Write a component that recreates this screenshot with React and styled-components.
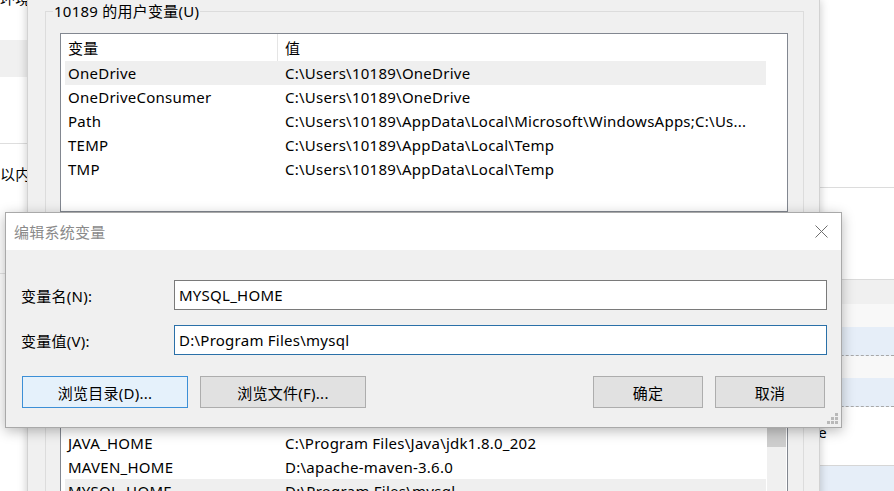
import React from 'react'
import styled, { createGlobalStyle } from 'styled-components'

const GlobalStyle = createGlobalStyle`
  html, body {
    margin: 0;
    padding: 0;
    background: #ffffff;
    overflow: hidden;
  }
  body {
    font-family: "Noto Sans", "Noto Sans CJK SC", sans-serif;
    font-size: 15px;
    letter-spacing: 0.25px;
    color: #000;
  }
  * {
    box-sizing: border-box;
  }
`

const Desktop = styled.div`
  position: relative;
  width: 894px;
  height: 491px;
  overflow: hidden;
  background: #ffffff;
`

/* ---------- window at the very back ---------- */

const BackWindow = styled.div`
  position: absolute;
  inset: 0;
  display: flex;
  justify-content: space-between;
  background: #ffffff;
`

const BackLeft = styled.div`
  width: 27px;
  display: flex;
  flex-direction: column;
  overflow: hidden;
`

const BackText = styled.div`
  height: 20px;
  line-height: 20px;
  white-space: nowrap;
  margin-top: ${p => p.$mt || 0}px;
  flex-shrink: 0;
`

const BackBand = styled.div`
  height: ${p => p.$h}px;
  margin-top: ${p => p.$mt || 0}px;
  background: ${p => p.$bg || '#ffffff'};
  border-top: ${p => (p.$top ? '1px solid #dadada' : 'none')};
  border-bottom: ${p => p.$bottom || 'none'};
  flex-shrink: 0;
`

const BackRight = styled.div`
  width: 300px;
  display: flex;
  flex-direction: column;
`

const BackTail = styled.div`
  height: 59px;
  padding: 0 67px 8px 0;
  display: flex;
  align-items: center;
  justify-content: flex-end;
  border-bottom: 1px solid #d6d6d6;
  white-space: nowrap;
  flex-shrink: 0;
`

/* ---------- environment variables window ---------- */

const EnvWindow = styled.div`
  position: absolute;
  left: 27px;
  top: 0;
  width: 793px;
  height: 620px;
  background: #f0f0f0;
  border-left: 1px solid #d2d2d2;
  border-right: 1px solid #d2d2d2;
  box-shadow: 0 0 9px rgba(0, 0, 0, 0.22);
  padding: 11px 0 0 17px;
`

const Group = styled.div`
  position: relative;
  width: 759px;
  border: 1px solid #dcdcdc;
  padding: 21px 0 0 14px;
  margin-bottom: 16px;
`

const Legend = styled.span`
  position: absolute;
  top: -11px;
  left: 7px;
  padding: 0 1px;
  line-height: 20px;
  background: #f0f0f0;
  white-space: nowrap;
`

const ListView = styled.div`
  width: 728px;
  height: ${p => p.$h}px;
  border: 1px solid #828790;
  background: #ffffff;
  display: flex;
  flex-direction: column;
  overflow: hidden;
`

const HeaderRow = styled.div`
  height: 27px;
  width: 701px;
  margin-left: 4px;
  display: flex;
  flex-shrink: 0;
`

const HeaderCell = styled.div`
  display: flex;
  align-items: center;
  flex: ${p => (p.$first ? '0 0 213px' : '1')};
  padding-left: ${p => (p.$first ? 3 : 7)}px;
  border-right: ${p => (p.$first ? '1px solid #e5e5e5' : 'none')};
`

const ListBody = styled.div`
  flex: 1;
  display: flex;
`

const Rows = styled.div`
  width: 701px;
  margin-left: 4px;
  display: flex;
  flex-direction: column;
`

const Row = styled.div`
  height: 24px;
  display: flex;
  align-items: center;
  background: ${p => (p.$selected ? '#efefef' : 'transparent')};
  white-space: nowrap;
  flex-shrink: 0;
`

const Cell = styled.div`
  flex: ${p => (p.$first ? '0 0 213px' : '1')};
  padding-left: ${p => (p.$first ? 3 : 7)}px;
  overflow: hidden;
`

const ScrollBar = styled.div`
  width: 19px;
  margin-left: 1px;
  background: #f0f0f0;
  padding-top: 17px;
`

const Thumb = styled.div`
  height: 95px;
  background: #cdcdcd;
`

/* space taken by the new / edit / delete buttons, hidden behind the dialog */
const GroupButtons = styled.div`
  height: 56px;
`

/* ---------- edit dialog ---------- */

const Dialog = styled.div`
  position: absolute;
  left: 5px;
  top: 212px;
  width: 837px;
  height: 216px;
  background: #f0f0f0;
  border: 1px solid #a9a9a9;
  box-shadow: 0 3px 12px rgba(0, 0, 0, 0.28);
  display: flex;
  flex-direction: column;
`

const TitleBar = styled.div`
  height: 37px;
  background: #ffffff;
  display: flex;
  align-items: center;
  padding-left: 8px;
  flex-shrink: 0;
`

const Title = styled.span`
  color: #8a8a8a;
`

const CloseButton = styled.div`
  margin-left: auto;
  width: 40px;
  height: 37px;
  display: flex;
  align-items: center;
  justify-content: center;
`

const DialogBody = styled.div`
  flex: 1;
  padding: 30px 14px 0 15px;
  display: flex;
  flex-direction: column;
`

const FieldRow = styled.div`
  display: flex;
  align-items: center;
  height: 30px;
  margin-bottom: ${p => p.$mb}px;
`

const Label = styled.div`
  width: 153px;
  flex-shrink: 0;
`

const TextBox = styled.div`
  flex: 1;
  height: 30px;
  background: #ffffff;
  border: 1px solid ${p => (p.$focused ? '#2a70a8' : '#7a7a7a')};
  padding-left: 4px;
  display: flex;
  align-items: center;
  white-space: nowrap;
`

const ButtonRow = styled.div`
  display: flex;
  gap: 12px;
  padding: 0 2px 0 1px;
`

const Button = styled.div`
  width: ${p => p.$w}px;
  height: 32px;
  border: 1px solid ${p => (p.$default ? '#3c8fd6' : '#adadad')};
  background: ${p => (p.$default ? '#e5f1fb' : '#e1e1e1')};
  display: flex;
  align-items: center;
  justify-content: center;
  margin-left: ${p => (p.$push ? 'auto' : '0')};
`

const Grip = styled.svg`
  position: absolute;
  right: 2px;
  bottom: 2px;
`

const userVars = [
  ['OneDrive', 'C:\\Users\\10189\\OneDrive'],
  ['OneDriveConsumer', 'C:\\Users\\10189\\OneDrive'],
  ['Path', 'C:\\Users\\10189\\AppData\\Local\\Microsoft\\WindowsApps;C:\\Us...'],
  ['TEMP', 'C:\\Users\\10189\\AppData\\Local\\Temp'],
  ['TMP', 'C:\\Users\\10189\\AppData\\Local\\Temp'],
]

// rows above JAVA_HOME are covered by the dialog, so they stay blank
const systemVars = [
  ['', ''],
  ['', ''],
  ['', ''],
  ['', ''],
  ['JAVA_HOME', 'C:\\Program Files\\Java\\jdk1.8.0_202'],
  ['MAVEN_HOME', 'D:\\apache-maven-3.6.0'],
  ['MYSQL_HOME', 'D:\\Program Files\\mysql'],
  ['NUMBER_OF_PROCESSORS', '8'],
]

const VarList = ({ items, height, selected, scroll, header = true }) => (
  <ListView $h={height}>
    <HeaderRow>
      {header && <HeaderCell $first>变量</HeaderCell>}
      {header && <HeaderCell>值</HeaderCell>}
    </HeaderRow>
    <ListBody>
      <Rows>
        {items.map(([name, value], i) => (
          <Row key={i} $selected={i === selected}>
            <Cell $first>{name}</Cell>
            <Cell>{value}</Cell>
          </Row>
        ))}
      </Rows>
      {scroll && (
        <ScrollBar>
          <Thumb />
        </ScrollBar>
      )}
    </ListBody>
  </ListView>
)

const App = () => {
  return (
    <React.Fragment>
      <GlobalStyle />
      <Desktop>
        <BackWindow>
          <BackLeft>
            <BackText $mt={-12}>环境</BackText>
            <BackBand $h={37} $mt={32} $bg="#f0f0f0" />
            <BackBand $h={67} $bottom="1px solid #dedede" />
            <BackText $mt={20}>以内</BackText>
            <BackBand $h={90} $bottom="1px solid #e4e4e4" />
          </BackLeft>
          <BackRight>
            <BackBand $h={188} $bottom="1px solid #dcdcdc" />
            <BackBand $h={91} />
            <BackBand $h={25} $top $bg="#f0f0f0" />
            <BackBand $h={23} $bg="#f8f8f8" />
            <BackBand $h={29} $bg="#e6eef8" $bottom="1px dashed #a8a8a8" />
            <BackBand $h={22} $bg="#f8f8f8" />
            <BackBand $h={29} $bg="#e6eef8" $bottom="1px dashed #a8a8a8" />
            <BackTail>e</BackTail>
            <BackBand $h={40} $bg="#e6eef8" />
          </BackRight>
        </BackWindow>

        <EnvWindow>
          <Group>
            <Legend>10189 的用户变量(U)</Legend>
            <VarList items={userVars} height={179} selected={0} />
            <GroupButtons />
          </Group>
          <Group>
            <VarList items={systemVars} height={260} selected={6} scroll header={false} />
          </Group>
        </EnvWindow>

        <Dialog>
          <TitleBar>
            <Title>编辑系统变量</Title>
            <CloseButton>
              <svg width="13" height="13" viewBox="0 0 13 13">
                <path d="M0.5 0.5 L12.5 12.5 M12.5 0.5 L0.5 12.5" stroke="#6e6e6e" strokeWidth="1" fill="none" />
              </svg>
            </CloseButton>
          </TitleBar>
          <DialogBody>
            <FieldRow $mb={15}>
              <Label>变量名(N):</Label>
              <TextBox>MYSQL_HOME</TextBox>
            </FieldRow>
            <FieldRow $mb={21}>
              <Label>变量值(V):</Label>
              <TextBox $focused>D:\Program Files\mysql</TextBox>
            </FieldRow>
            <ButtonRow>
              <Button $w={166} $default>浏览目录(D)...</Button>
              <Button $w={166}>浏览文件(F)...</Button>
              <Button $w={110} $push>确定</Button>
              <Button $w={110}>取消</Button>
            </ButtonRow>
          </DialogBody>
          <Grip width="12" height="12" viewBox="0 0 12 12">
            <rect x="8" y="0" width="3" height="3" fill="#b9b9b9" />
            <rect x="4" y="4" width="3" height="3" fill="#b9b9b9" />
            <rect x="8" y="4" width="3" height="3" fill="#b9b9b9" />
            <rect x="0" y="8" width="3" height="3" fill="#b9b9b9" />
            <rect x="4" y="8" width="3" height="3" fill="#b9b9b9" />
            <rect x="8" y="8" width="3" height="3" fill="#b9b9b9" />
          </Grip>
        </Dialog>
      </Desktop>
    </React.Fragment>
  )
}

export default App
